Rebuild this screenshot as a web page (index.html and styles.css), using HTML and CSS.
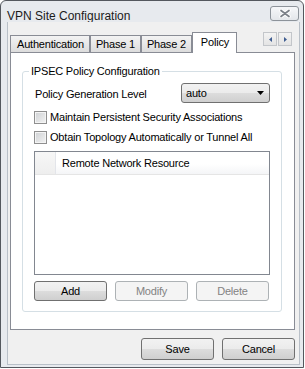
FILE: index.html
```html
<!DOCTYPE html>
<html>
<head>
<meta charset="utf-8">
<link rel="stylesheet" href="styles.css">
</head>
<body>
<div class="window">
  <div class="titlebar">
    <span class="title">VPN Site Configuration</span>
    <span class="close">
      <svg width="12" height="9" viewBox="0 0 12 9">
        <path d="M2 1.5 L10 7.5 M10 1.5 L2 7.5" stroke="#fdfdfd" stroke-width="3.6" stroke-linecap="round"/>
        <path d="M2 1.5 L10 7.5 M10 1.5 L2 7.5" stroke="#7b8088" stroke-width="1.7" stroke-linecap="round"/>
      </svg>
    </span>
  </div>
  <div class="client">
    <div class="tabstrip">
      <div class="tab">Authentication</div>
      <div class="tab">Phase 1</div>
      <div class="tab">Phase 2</div>
      <div class="tab active">Policy</div>
      <div class="tab-scroll">
        <span class="scroll-btn"><svg width="3" height="5" viewBox="0 0 3 5"><polygon points="3,0 0,2.5 3,5" fill="#3f5d91"/></svg></span>
        <span class="scroll-btn"><svg width="3" height="5" viewBox="0 0 3 5"><polygon points="0,0 3,2.5 0,5" fill="#3f5d91"/></svg></span>
      </div>
    </div>
    <div class="panel">
      <div class="group">
        <div class="group-title">IPSEC Policy Configuration</div>
        <div class="level-row">
          <span class="level-label">Policy Generation Level</span>
          <div class="combo">
            <span>auto</span>
            <svg width="7" height="4" viewBox="0 0 7 4"><polygon points="0,0 7,0 3.5,4" fill="#000"/></svg>
          </div>
        </div>
        <div class="check first"><span class="box"></span><span>Maintain Persistent Security Associations</span></div>
        <div class="check"><span class="box"></span><span>Obtain Topology Automatically or Tunnel All</span></div>
        <div class="listview">
          <div class="lv-header">
            <div class="lv-col0"></div>
            <div class="lv-col1">Remote Network Resource</div>
          </div>
        </div>
        <div class="btn-row">
          <button class="btn">Add</button>
          <button class="btn" disabled>Modify</button>
          <button class="btn" disabled>Delete</button>
        </div>
      </div>
    </div>
    <div class="dialog-buttons">
      <button class="btn big">Save</button>
      <button class="btn big">Cancel</button>
    </div>
  </div>
</div>
</body>
</html>
```
FILE: styles.css
```css
* { box-sizing: border-box; }
html, body { margin: 0; background: #ffffff; }
body {
  font-family: "Liberation Sans", Arial, sans-serif;
  font-size: 11px;
  line-height: 13px;
  letter-spacing: -0.2px;
  color: #000;
}
.window {
  width: 304px;
  height: 368px;
  border: 1px solid #54585e;
  border-radius: 6px 6px 0 0;
  background: #e7eaee;
  display: flex;
  flex-direction: column;
}
.titlebar {
  height: 21px;
  flex: none;
  display: flex;
  justify-content: space-between;
  align-items: flex-start;
  padding-left: 6px;
}
.title {
  font-size: 12px;
  line-height: 14px;
  letter-spacing: 0;
  margin-top: 8px;
  color: #1b1b1b;
}
.close {
  width: 29px;
  height: 15px;
  margin: 5px 4px 0 0;
  border: 1px solid #8d939a;
  border-radius: 3px;
  background: linear-gradient(#f6f7f9, #e3e6ea);
  display: flex;
  align-items: center;
  justify-content: center;
}
.client {
  flex: 1;
  margin: 0 3px 2px 6px;
  background: #f0f0f0;
  border: 1px solid #b9c0c8;
  border-top: none;
  display: flex;
  flex-direction: column;
  padding: 0 4px 4px 2px;
}
.tabstrip {
  height: 30px;
  flex: none;
  display: flex;
  align-items: flex-end;
}
.tab {
  height: 17px;
  border: 1px solid #898c95;
  border-bottom: none;
  background: linear-gradient(#f3f3f3, #e6e6e6 60%, #dcdcdc);
  padding: 0 5px;
  line-height: 16px;
  white-space: nowrap;
}
.tab:first-child { padding-left: 6px; }
.tab.active {
  height: 21px;
  margin-bottom: -1px;
  position: relative;
  z-index: 1;
  background: #ffffff;
  padding: 0 7px 0 8px;
  line-height: 18px;
}
.tab-scroll {
  margin-left: auto;
  margin-right: 3px;
  align-self: flex-start;
  margin-top: 10px;
  display: flex;
  gap: 1px;
}
.scroll-btn {
  width: 14px;
  height: 14px;
  border: 1px solid #c3c6ca;
  background: linear-gradient(#f3f3f3, #e4e4e4);
  display: flex;
  align-items: center;
  justify-content: center;
}
.panel {
  height: 278px;
  flex: none;
  border: 1px solid #898c95;
  background: #ffffff;
  padding: 18px 12px 0 11px;
}
.group {
  height: 241px;
  border: 1px solid #d5dfe5;
  border-radius: 3px;
  padding: 0 11px;
  display: flex;
  flex-direction: column;
}
.group-title {
  align-self: flex-start;
  margin: -7px 0 0 -5px;
  padding: 0 2px;
  background: #ffffff;
  line-height: 13px;
}
.level-row {
  display: flex;
  justify-content: space-between;
  align-items: center;
  margin-top: 5px;
  height: 20px;
}
.level-label { padding-left: 1px; margin-top: 2px; }
.combo {
  width: 89px;
  height: 20px;
  border: 1px solid #707070;
  border-radius: 3px;
  background: linear-gradient(#f2f2f2 0%, #ebebeb 50%, #dddddd 50%, #cfcfcf 100%);
  display: flex;
  align-items: center;
  justify-content: space-between;
  padding: 0 5px 0 4px;
}
.check {
  display: flex;
  align-items: center;
  gap: 3px;
  height: 13px;
  margin-top: 7px;
}
.check.first { margin-top: 8px; }
.box {
  width: 13px;
  height: 13px;
  flex: none;
  border: 1px solid #8f8f8f;
  background: linear-gradient(135deg, #cfd1d4, #f2f2f2);
  box-shadow: inset 0 0 0 1px #f4f4f4;
}
.listview {
  height: 124px;
  margin-top: 7px;
  border: 1px solid #828790;
  background: #ffffff;
}
.lv-header {
  height: 23px;
  display: flex;
  border-bottom: 1px solid #e5e5e5;
  background: linear-gradient(#ffffff 0%, #ffffff 55%, #f4f5f7 100%);
}
.lv-col0 {
  width: 21px;
  border-right: 1px solid #e3e5ea;
  background: linear-gradient(#f7f7f7, #eeeeee);
}
.lv-col1 {
  padding-left: 6px;
  line-height: 22px;
}
.btn-row {
  display: flex;
  gap: 8px;
  margin-top: 6px;
}
.btn {
  width: 73px;
  height: 20px;
  border: 1px solid #707070;
  border-radius: 3px;
  background: linear-gradient(#f2f2f2 0%, #ebebeb 50%, #dddddd 50%, #cfcfcf 100%);
  font: inherit;
  letter-spacing: inherit;
  color: #000;
  padding: 0;
}
.btn:disabled {
  border-color: #adb2b5;
  background: #f4f4f4;
  color: #838383;
}
.btn.big { height: 22px; }
.dialog-buttons {
  display: flex;
  justify-content: flex-end;
  gap: 8px;
  margin-top: 8px;
}
```
